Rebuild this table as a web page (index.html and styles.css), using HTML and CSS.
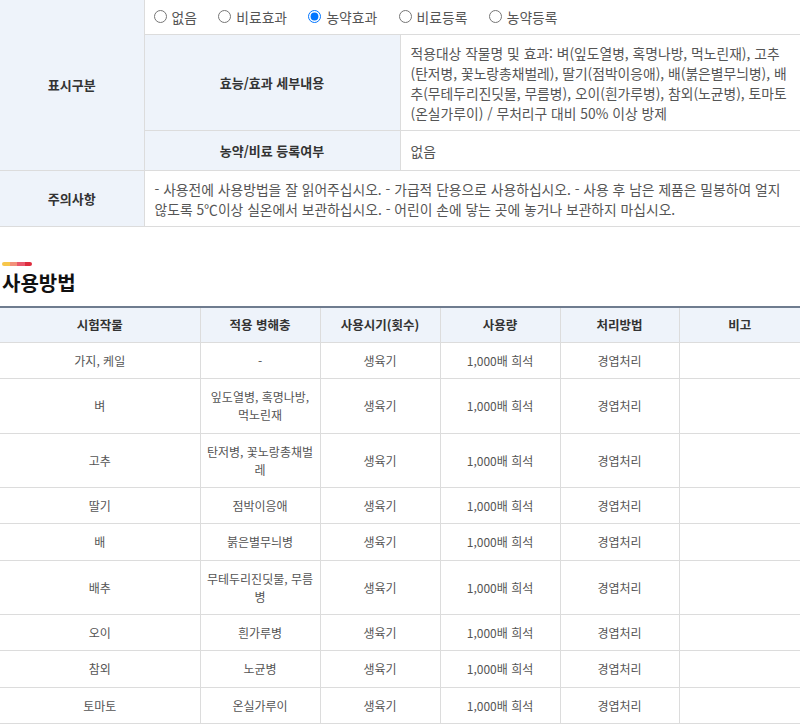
FILE: index.html
```html
<!DOCTYPE html>
<html lang="ko">
<head>
<meta charset="utf-8">
<link rel="stylesheet" href="styles.css">
</head>
<body>
<table class="info">
  <colgroup><col class="c1"><col class="c2"><col></colgroup>
  <tr>
    <th class="label" rowspan="3">표시구분</th>
    <td class="radios" colspan="2">
      <label class="rd"><input type="radio" name="k"> 없음</label>
      <label class="rd"><input type="radio" name="k"> 비료효과</label>
      <label class="rd"><input type="radio" name="k" checked> 농약효과</label>
      <label class="rd"><input type="radio" name="k"> 비료등록</label>
      <label class="rd"><input type="radio" name="k"> 농약등록</label>
    </td>
  </tr>
  <tr>
    <th class="sub">효능/효과 세부내용</th>
    <td class="txt">적용대상 작물명 및 효과: 벼(잎도열병, 혹명나방, 먹노린재), 고추(탄저병, 꽃노랑총채벌레), 딸기(점박이응애), 배(붉은별무늬병), 배추(무테두리진딧물, 무름병), 오이(흰가루병), 참외(노균병), 토마토(온실가루이) / 무처리구 대비 50% 이상 방제</td>
  </tr>
  <tr class="short">
    <th class="sub">농약/비료 등록여부</th>
    <td class="txt">없음</td>
  </tr>
  <tr>
    <th class="label">주의사항</th>
    <td class="txt" colspan="2">- 사용전에 사용방법을 잘 읽어주십시오. - 가급적 단용으로 사용하십시오. - 사용 후 남은 제품은 밀봉하여 얼지 않도록 5℃이상 실온에서 보관하십시오. - 어린이 손에 닿는 곳에 놓거나 보관하지 마십시오.</td>
  </tr>
</table>

<div class="section">
  <div class="bar"><span class="s1"></span><span class="s2"></span><span class="s3"></span><span class="s4"></span></div>
  <h2 class="title">사용방법</h2>
</div>

<table class="usage">
  <colgroup><col class="u1"><col class="u2"><col class="u3"><col class="u4"><col class="u5"><col></colgroup>
  <thead>
    <tr><th>시험작물</th><th>적용 병해충</th><th>사용시기(횟수)</th><th>사용량</th><th>처리방법</th><th>비고</th></tr>
  </thead>
  <tbody>
    <tr><td>가지, 케일</td><td>-</td><td>생육기</td><td>1,000배 희석</td><td>경엽처리</td><td></td></tr>
    <tr><td>벼</td><td>잎도열병, 혹명나방, 먹노린재</td><td>생육기</td><td>1,000배 희석</td><td>경엽처리</td><td></td></tr>
    <tr><td>고추</td><td>탄저병, 꽃노랑총채벌레</td><td>생육기</td><td>1,000배 희석</td><td>경엽처리</td><td></td></tr>
    <tr><td>딸기</td><td>점박이응애</td><td>생육기</td><td>1,000배 희석</td><td>경엽처리</td><td></td></tr>
    <tr><td>배</td><td>붉은별무늬병</td><td>생육기</td><td>1,000배 희석</td><td>경엽처리</td><td></td></tr>
    <tr><td>배추</td><td>무테두리진딧물, 무름병</td><td>생육기</td><td>1,000배 희석</td><td>경엽처리</td><td></td></tr>
    <tr><td>오이</td><td>흰가루병</td><td>생육기</td><td>1,000배 희석</td><td>경엽처리</td><td></td></tr>
    <tr><td>참외</td><td>노균병</td><td>생육기</td><td>1,000배 희석</td><td>경엽처리</td><td></td></tr>
    <tr><td>토마토</td><td>온실가루이</td><td>생육기</td><td>1,000배 희석</td><td>경엽처리</td><td></td></tr>
  </tbody>
</table>
</body>
</html>
```

FILE: styles.css
```css
html, body {
  margin: 0;
  padding: 0;
  background: #fff;
  overflow: hidden;
}
body {
  width: 800px;
  font-family: "Noto Sans CJK KR", "Noto Sans", sans-serif;
  color: #555;
}

table {
  border-collapse: collapse;
  width: 800px;
  table-layout: fixed;
}

/* top info table */
.info .c1 { width: 144px; }
.info .c2 { width: 256px; }
.info th, .info td {
  border: 1px solid #dcdcdc;
  font-size: 13.8px;
  line-height: 20px;
}
.info tr > *:first-child { border-left: 0; }
.info tr > *:last-child { border-right: 0; }
.info tr:first-child > * { border-top: 0; }
.info th {
  background: #eef3fa;
  color: #333;
  font-weight: bold;
  font-size: 13px;
  text-align: center;
}
.info .radios {
  height: 34px;
  padding: 0 0 0 9px;
  vertical-align: middle;
  color: #555;
}
.rd {
  display: inline-flex;
  align-items: center;
  margin-right: 17.5px;
}
.rd input {
  margin: 0 5px 0 0;
  width: 13px;
  height: 13px;
}
.info .txt {
  padding: 8px 10px 7px 10px;
  text-align: left;
}
.info .short > * {
  height: 25px;
  padding-top: 7px;
  padding-bottom: 7px;
}

/* heading */
.section {
  padding: 35px 0 9px 2px;
}
.bar {
  display: flex;
  width: 30px;
  height: 4px;
  border-radius: 2px;
  overflow: hidden;
}
.bar span { flex: 1; }
.bar .s1 { background: #f7c64a; }
.bar .s2 { background: #f2917a; }
.bar .s3 { background: #e9586c; }
.bar .s4 { background: #de2c3e; }
.title {
  margin: 3px 0 0 0;
  font-size: 20px;
  line-height: 28px;
  font-weight: bold;
  color: #111;
}

/* usage table */
.usage .u1 { width: 200px; }
.usage .u2 { width: 120px; }
.usage .u3 { width: 120px; }
.usage .u4 { width: 120px; }
.usage .u5 { width: 119px; }
.usage th, .usage td {
  border: 1px solid #dcdcdc;
  font-size: 12px;
  line-height: 18px;
  text-align: center;
  padding: 9px 6px 8.35px 6px;
}
.usage tr > *:first-child { border-left: 0; }
.usage tr > *:last-child { border-right: 0; }
.usage thead th {
  background: #eef3fa;
  border-top: 2px solid #6f7c8f;
  color: #333;
  font-weight: bold;
  font-size: 12.5px;
  padding: 8px 6px;
}
.usage td { color: #555; }
```
